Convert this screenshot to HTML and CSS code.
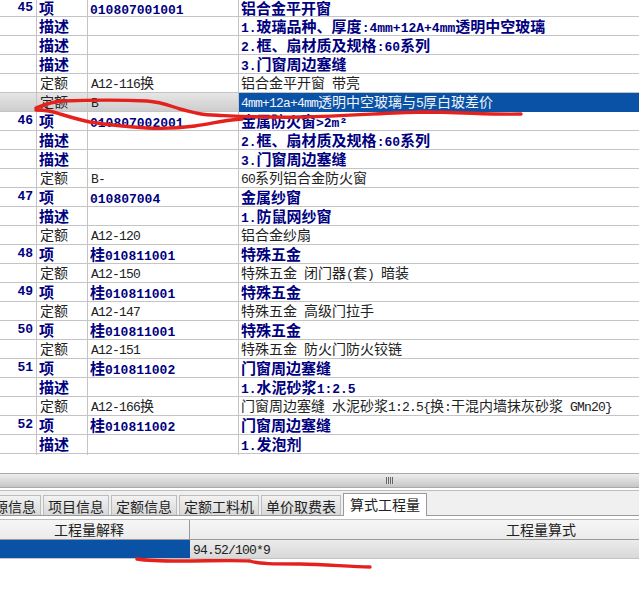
FILE: index.html
```html
<!DOCTYPE html>
<html lang="zh">
<head>
<meta charset="utf-8">
<title>算式工程量</title>
<link rel="stylesheet" href="styles.css">
</head>
<body>
<div class="page">
  <div class="grid">
    <div class="row first item"><div class="c n">45</div><div class="c t">项</div><div class="c code"><span class="lb">010807001001</span></div><div class="c d">铝合金平开窗</div></div>
    <div class="row item"><div class="c n"></div><div class="c t">描述</div><div class="c code"></div><div class="c d"><span class="lb">1.</span>玻璃品种、厚度<span class="lb">:4mm+12A+4mm</span>透明中空玻璃</div></div>
    <div class="row item"><div class="c n"></div><div class="c t">描述</div><div class="c code"></div><div class="c d"><span class="lb">2.</span>框、扇材质及规格<span class="lb">:60</span>系列</div></div>
    <div class="row item"><div class="c n"></div><div class="c t">描述</div><div class="c code"></div><div class="c d"><span class="lb">3.</span>门窗周边塞缝</div></div>
    <div class="row"><div class="c n"></div><div class="c t">定额</div><div class="c code"><span class="l">A12-116</span>换</div><div class="c d">铝合金平开窗<span class="l"> </span>带亮</div></div>
    <div class="row sel"><div class="c n"></div><div class="c t">定额</div><div class="c code"><span class="l">B</span></div><div class="c d cur"><span class="l">4mm+12a+4mm</span>透明中空玻璃与<span class="l">5</span>厚白玻差价</div></div>
    <div class="row item"><div class="c n">46</div><div class="c t">项</div><div class="c code"><span class="lb">010807002001</span></div><div class="c d">金属防火窗<span class="lb">&gt;2m²</span></div></div>
    <div class="row item"><div class="c n"></div><div class="c t">描述</div><div class="c code"></div><div class="c d"><span class="lb">2.</span>框、扇材质及规格<span class="lb">:60</span>系列</div></div>
    <div class="row item"><div class="c n"></div><div class="c t">描述</div><div class="c code"></div><div class="c d"><span class="lb">3.</span>门窗周边塞缝</div></div>
    <div class="row"><div class="c n"></div><div class="c t">定额</div><div class="c code"><span class="l">B-</span></div><div class="c d"><span class="l">60</span>系列铝合金防火窗</div></div>
    <div class="row item"><div class="c n">47</div><div class="c t">项</div><div class="c code"><span class="lb">010807004</span></div><div class="c d">金属纱窗</div></div>
    <div class="row item"><div class="c n"></div><div class="c t">描述</div><div class="c code"></div><div class="c d"><span class="lb">1.</span>防鼠网纱窗</div></div>
    <div class="row"><div class="c n"></div><div class="c t">定额</div><div class="c code"><span class="l">A12-120</span></div><div class="c d">铝合金纱扇</div></div>
    <div class="row item"><div class="c n">48</div><div class="c t">项</div><div class="c code">桂<span class="lb">010811001</span></div><div class="c d">特殊五金</div></div>
    <div class="row"><div class="c n"></div><div class="c t">定额</div><div class="c code"><span class="l">A12-150</span></div><div class="c d">特殊五金<span class="l"> </span>闭门器<span class="l">(</span>套<span class="l">) </span>暗装</div></div>
    <div class="row item"><div class="c n">49</div><div class="c t">项</div><div class="c code">桂<span class="lb">010811001</span></div><div class="c d">特殊五金</div></div>
    <div class="row"><div class="c n"></div><div class="c t">定额</div><div class="c code"><span class="l">A12-147</span></div><div class="c d">特殊五金<span class="l"> </span>高级门拉手</div></div>
    <div class="row item"><div class="c n">50</div><div class="c t">项</div><div class="c code">桂<span class="lb">010811001</span></div><div class="c d">特殊五金</div></div>
    <div class="row"><div class="c n"></div><div class="c t">定额</div><div class="c code"><span class="l">A12-151</span></div><div class="c d">特殊五金<span class="l"> </span>防火门防火铰链</div></div>
    <div class="row item"><div class="c n">51</div><div class="c t">项</div><div class="c code">桂<span class="lb">010811002</span></div><div class="c d">门窗周边塞缝</div></div>
    <div class="row item"><div class="c n"></div><div class="c t">描述</div><div class="c code"></div><div class="c d"><span class="lb">1.</span>水泥砂浆<span class="lb">1:2.5</span></div></div>
    <div class="row"><div class="c n"></div><div class="c t">定额</div><div class="c code"><span class="l">A12-166</span>换</div><div class="c d">门窗周边塞缝<span class="l"> </span>水泥砂浆<span class="l">1:2.5{</span>换<span class="l">:</span>干混内墙抹灰砂浆<span class="l"> GMn20}</span></div></div>
    <div class="row item"><div class="c n">52</div><div class="c t">项</div><div class="c code">桂<span class="lb">010811002</span></div><div class="c d">门窗周边塞缝</div></div>
    <div class="row item"><div class="c n"></div><div class="c t">描述</div><div class="c code"></div><div class="c d"><span class="lb">1.</span>发泡剂</div></div>
  </div>

  <div class="scrollbar"><span class="grip"></span></div>

  <div class="tabs">
    <div class="tab clip">资源信息</div>
    <div class="tab">项目信息</div>
    <div class="tab">定额信息</div>
    <div class="tab">定额工料机</div>
    <div class="tab">单价取费表</div>
    <div class="tab active">算式工程量</div>
  </div>

  <div class="qty">
    <div class="qh left">工程量解释</div>
    <div class="qh right">工程量算式</div>
    <div class="qc blue"></div>
    <div class="qc val"><span class="l">94.52/100*9</span></div>
  </div>

  <svg class="ink" viewBox="0 0 639 602" aria-hidden="true">
    <path d="M36 108C44 105 50 102 62 101C90 100 125 100 147 101C162 102 170 106 180 109C192 112 200 115 212 115C235 116 265 118 300 117C345 116 385 113 420 112C460 112 495 115 521 114"/>
    <path d="M36 110C45 110 52 111 60 114C70 117 80 120 90 122C110 125 128 127 147 128C165 129 180 128 195 126C210 124 225 120 242 119"/>
    <path d="M137 559C150 561 165 561 180 561C205 561 235 560 250 561C258 564 275 564 300 564C325 564 350 567 370 567"/>
  </svg>
</div>
</body>
</html>
```
FILE: styles.css
```css
* { box-sizing: border-box; }
html, body { margin: 0; padding: 0; background: #fff; }
.page {
  position: relative;
  width: 639px;
  height: 602px;
  overflow: hidden;
  font-family: "Noto Sans CJK SC", sans-serif;
  font-size: 14px;
  color: #222;
}
.grid { display: flex; flex-direction: column; height: 473px; }
.row {
  display: grid;
  grid-template-columns: 37px 51px 151px 1fr;
  height: 19px;
  flex: none;
  border-bottom: 1px solid #c4c4c4;
  line-height: 17px;
  white-space: pre;
}
.row.first { height: 17px; line-height: 15px; }
.c { border-right: 1px solid #c4c4c4; padding-left: 3px; height: 100%; }
.c.d { border-right: 0; padding-left: 2px; }
.c.n { font-family: "Liberation Mono", monospace; font-weight: 700; font-size: 13px; color: #000080; text-align: right; padding: 0 3px 0 0; }
.item { color: #000080; font-weight: 700; font-size: 15px; }
.item .c.t, .item .c.code { padding-left: 2px; }
.l { font-family: "Liberation Mono", monospace; font-size: 13px; letter-spacing: -0.8px; font-weight: 400; }
.lb { font-family: "Liberation Mono", monospace; font-size: 13px; font-weight: 700; }
.sel { background: linear-gradient(#e6e6e6, #cdcdcd); }
.cur { background: #0a52a5; color: #f0f4fa; }
.scrollbar {
  height: 15px;
  display: flex;
  justify-content: center;
  align-items: center;
  padding-left: 140px;
  background: linear-gradient(#eeeeee, #c6c6c6);
  border-top: 1px solid #a9a9a9;
  border-bottom: 1px solid #a9a9a9;
}
.grip { width: 8px; height: 7px; background: repeating-linear-gradient(90deg, #666 0 1px, #ddd 1px 2px); }
.tabs {
  display: flex;
  align-items: flex-end;
  height: 26px;
  margin-top: 2px;
  gap: 2px;
  background: #f0f0f0;
  border-top: 1px solid #bdbdbd;
  border-bottom: 1px solid #9a9a9a;
}
.tab {
  height: 20px;
  line-height: 20px;
  padding: 0 4px;
  font-size: 14px;
  white-space: nowrap;
  background: linear-gradient(#f2f2f2, #d8d8d8);
  border: 1px solid #bcbcbc;
  border-bottom: 0;
  flex: none;
}
.tab.clip { margin-left: -25px; }
.tab.active {
  height: 23px;
  line-height: 20px;
  padding: 0 6px;
  background: #fff;
  border-color: #9a9a9a;
  margin-bottom: -1px;
}
.qty {
  display: grid;
  grid-template-columns: 190px 449px;
  grid-template-rows: 20px 19px;
  margin-top: 3px;
  border-top: 1px solid #bdbdbd;
}
.qh {
  font-size: 14px;
  line-height: 18px;
  text-align: center;
  background: linear-gradient(#f6f6f6, #ebebeb);
  border-bottom: 1px solid #9a9a9a;
  white-space: nowrap;
}
.qh.left { padding-right: 11px; border-right: 1px solid #9a9a9a; }
.qh.right { padding-left: 253px; }
.qc { height: 19px; line-height: 16px; border-bottom: 1px solid #c4c4c4; }
.blue { background: #0a52a5; }
.val { background: linear-gradient(#ececec, #d8d8d8); padding-left: 3px; }
.ink {
  position: absolute;
  left: 0;
  top: 0;
  width: 639px;
  height: 602px;
  pointer-events: none;
}
.ink path { fill: none; stroke: #e5211d; stroke-width: 3.4; stroke-linecap: round; stroke-linejoin: round; }
```
